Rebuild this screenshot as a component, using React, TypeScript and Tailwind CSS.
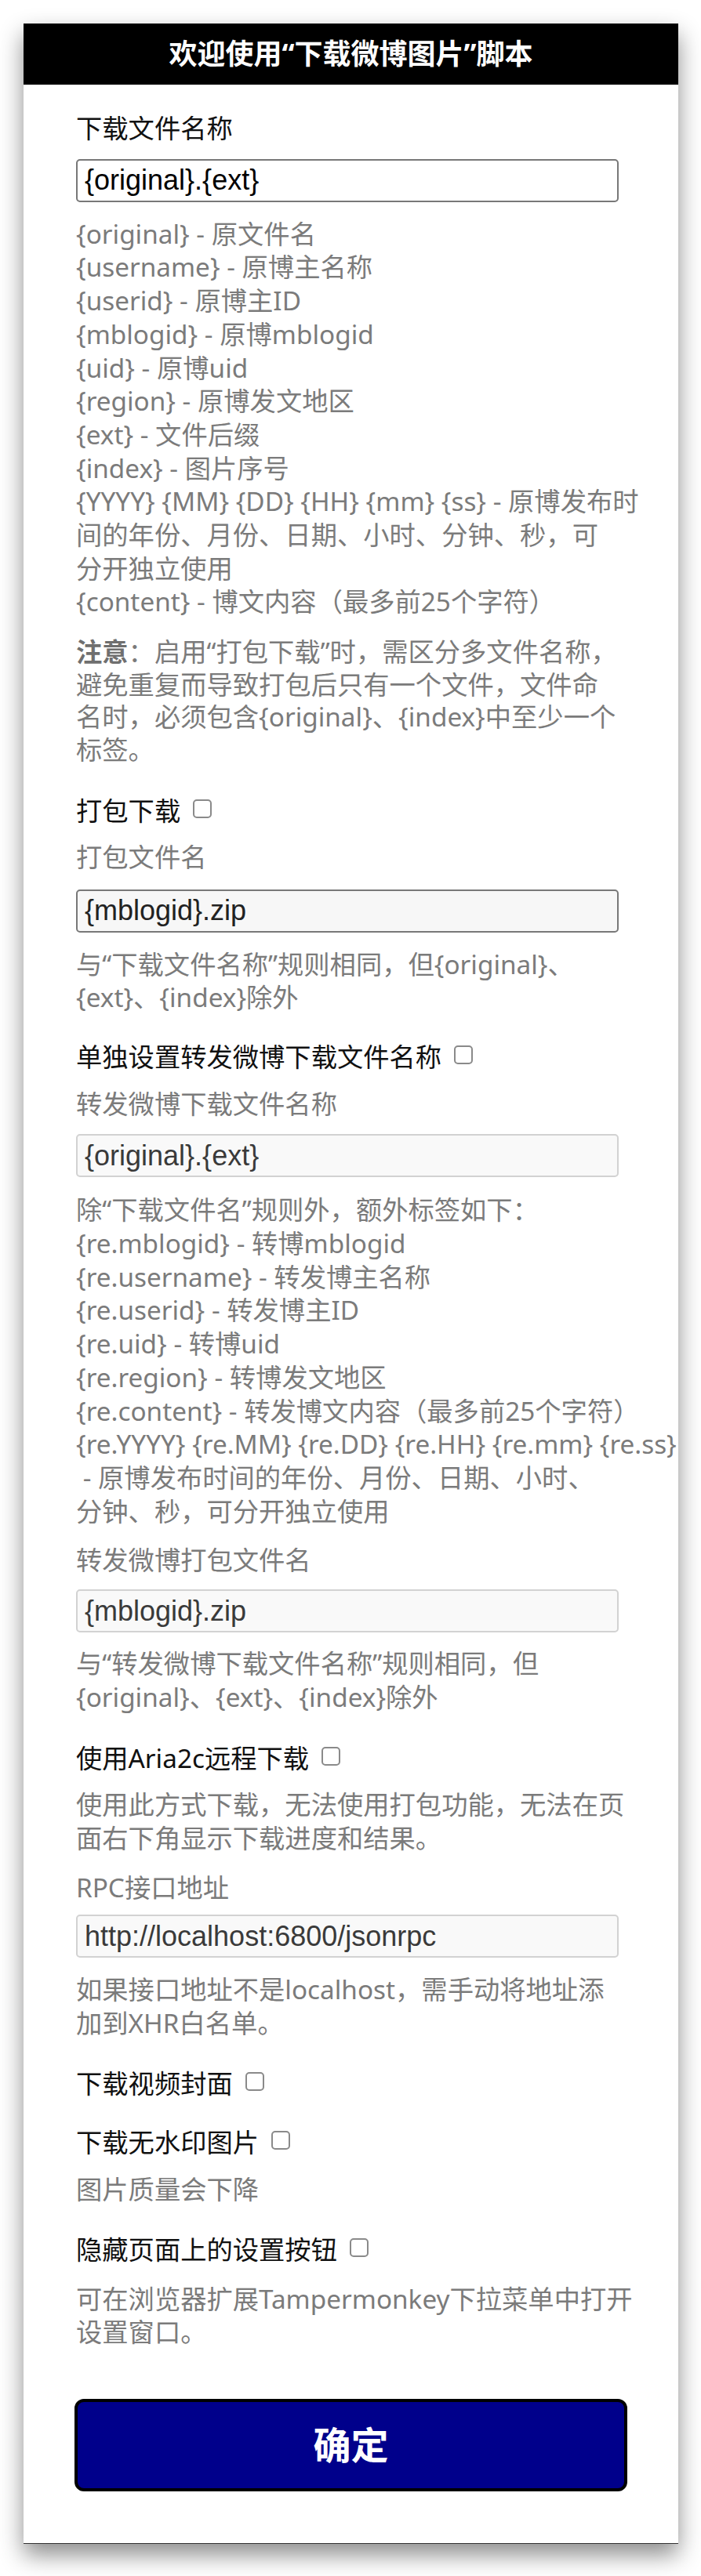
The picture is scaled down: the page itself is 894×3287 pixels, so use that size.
import React from 'react';

type FieldProps = {
  value: string;
  muted?: boolean;
  tinted?: boolean;
  className?: string;
};

const Check: React.FC = () => (
  <span className="inline-block w-[24px] h-[24px] ml-[16px] align-[3px] rounded-[5px] border-[2px] border-[#8a8a8a] bg-white" />
);

const Field: React.FC<FieldProps> = ({ value, muted, tinted, className = '' }) => (
  <input
    readOnly
    value={value}
    className={`block w-[692px] h-[55px] rounded-[5px] border-[2.5px] px-[9px] text-[36px] font-['Liberation_Sans',Arial,sans-serif] outline-none ${
      muted
        ? 'border-[#d2d2d2] bg-[#f9f9f9] text-[#3a3a3a]'
        : tinted
          ? 'border-[#787878] bg-[#f7f7f7] text-[#222]'
          : 'border-[#787878] bg-white text-black'
    } ${className}`}
  />
);

const Title: React.FC<{ text: string; check?: boolean; className?: string }> = ({ text, check, className = '' }) => (
  <div className={`leading-[42.7px] text-[#111] whitespace-nowrap ${className}`}>
    {text}
    {check && <Check />}
  </div>
);

const Hint: React.FC<{ lines: React.ReactNode[]; className?: string }> = ({ lines, className = '' }) => (
  <div className={`leading-[42.7px] text-[#7b7b7b] ${className}`}>
    {lines.map((line, i) => (
      <div key={i} className="whitespace-nowrap">
        {line}
      </div>
    ))}
  </div>
);

export default function App() {
  return (
    <div className="bg-white pt-[30px] pb-[41px] font-['Noto_Sans','Noto_Sans_CJK_SC',sans-serif]">
      <div className="ml-[30px] w-[835px] h-[3216px] bg-white flex flex-col border-b border-[#333] shadow-[0_14px_28px_rgba(0,0,0,0.45)]">
        <div className="h-[78px] bg-black flex items-center justify-center text-white text-[36px] font-bold whitespace-nowrap">
          欢迎使用“下载微博图片”脚本
        </div>

        <div className="flex flex-col pl-[67px] pt-[34px] text-[33.3px]">
          {/* 下载文件名称 */}
          <Title text="下载文件名称" />
          <Field value="{original}.{ext}" className="mt-[18px]" />
          <Hint
            className="mt-[19px]"
            lines={[
              '{original} - 原文件名',
              '{username} - 原博主名称',
              '{userid} - 原博主ID',
              '{mblogid} - 原博mblogid',
              '{uid} - 原博uid',
              '{region} - 原博发文地区',
              '{ext} - 文件后缀',
              '{index} - 图片序号',
              '{YYYY} {MM} {DD} {HH} {mm} {ss} - 原博发布时',
              '间的年份、月份、日期、小时、分钟、秒，可',
              '分开独立使用',
              '{content} - 博文内容（最多前25个字符）',
            ]}
          />
          <div className="mt-[22px] leading-[41.5px] text-[#7b7b7b]">
            <div className="whitespace-nowrap">
              <b className="font-bold text-[#6f6f6f]">注意</b>：启用“打包下载”时，需区分多文件名称，
            </div>
            <div className="whitespace-nowrap">避免重复而导致打包后只有一个文件，文件命</div>
            <div className="whitespace-nowrap">名时，必须包含{'{original}'}、{'{index}'}中至少一个</div>
            <div className="whitespace-nowrap">标签。</div>
          </div>

          {/* 打包下载 */}
          <Title text="打包下载" check className="mt-[36px]" />
          <Hint className="mt-[16px]" lines={['打包文件名']} />
          <Field value="{mblogid}.zip" tinted className="mt-[20px]" />
          <Hint
            className="mt-[19px]"
            lines={['与“下载文件名称”规则相同，但{original}、', '{ext}、{index}除外']}
          />

          {/* 转发微博 */}
          <Title text="单独设置转发微博下载文件名称" check className="mt-[33px]" />
          <Hint className="mt-[17px]" lines={['转发微博下载文件名称']} />
          <Field value="{original}.{ext}" muted className="mt-[18px]" />
          <Hint
            className="mt-[20px]"
            lines={[
              '除“下载文件名”规则外，额外标签如下：',
              '{re.mblogid} - 转博mblogid',
              '{re.username} - 转发博主名称',
              '{re.userid} - 转发博主ID',
              '{re.uid} - 转博uid',
              '{re.region} - 转博发文地区',
              '{re.content} - 转发博文内容（最多前25个字符）',
              '{re.YYYY} {re.MM} {re.DD} {re.HH} {re.mm} {re.ss}',
              '\u00a0- 原博发布时间的年份、月份、日期、小时、',
              '分钟、秒，可分开独立使用',
            ]}
          />
          <Hint className="mt-[20px]" lines={['转发微博打包文件名']} />
          <Field value="{mblogid}.zip" muted className="mt-[16px]" />
          <Hint
            className="mt-[18px]"
            lines={['与“转发微博下载文件名称”规则相同，但', '{original}、{ext}、{index}除外']}
          />

          {/* Aria2c */}
          <Title text="使用Aria2c远程下载" check className="mt-[35px]" />
          <Hint
            className="mt-[17px]"
            lines={['使用此方式下载，无法使用打包功能，无法在页', '面右下角显示下载进度和结果。']}
          />
          <Hint className="mt-[20px]" lines={['RPC接口地址']} />
          <Field value="http://localhost:6800/jsonrpc" muted className="mt-[14px]" />
          <Hint
            className="mt-[19px]"
            lines={['如果接口地址不是localhost，需手动将地址添', '加到XHR白名单。']}
          />

          <Title text="下载视频封面" check className="mt-[34px]" />

          <Title text="下载无水印图片" check className="mt-[33px]" />
          <Hint className="mt-[17px]" lines={['图片质量会下降']} />

          <Title text="隐藏页面上的设置按钮" check className="mt-[34px]" />
          <Hint
            className="mt-[20px]"
            lines={['可在浏览器扩展Tampermonkey下拉菜单中打开', '设置窗口。']}
          />

          <button className="mt-[64px] -ml-[2px] w-[705px] h-[118px] rounded-[12px] border-[4px] border-black bg-[#00008b] text-white text-[48px] font-bold">
            确定
          </button>
        </div>
      </div>
    </div>
  );
}
